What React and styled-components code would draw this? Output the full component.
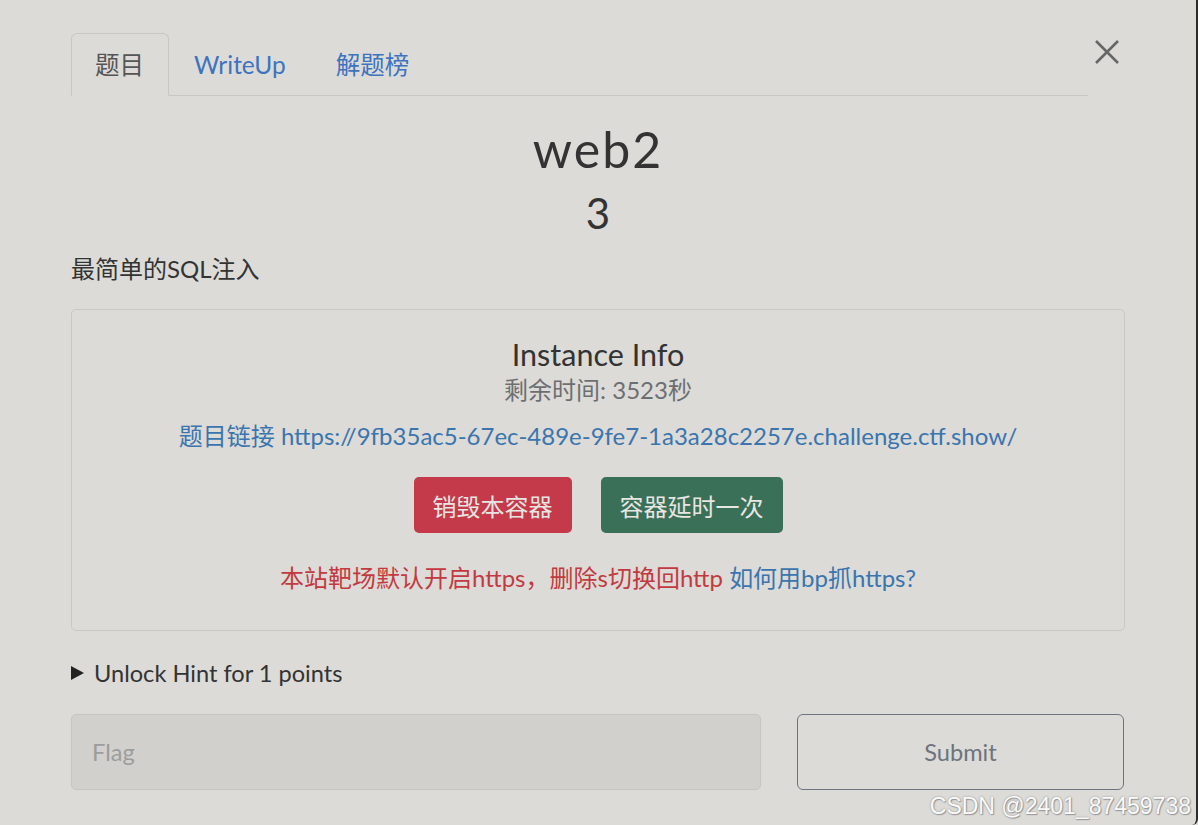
import React from 'react'
import styled, { createGlobalStyle } from 'styled-components'

const GlobalStyle = createGlobalStyle`
  html, body {
    margin: 0;
    padding: 0;
    background: #dcdbd7;
  }
  body {
    font-family: Lato, "Noto Sans CJK SC", sans-serif;
    color: #333;
  }
`

const Modal = styled.div`
  position: relative;
  box-sizing: border-box;
  width: 1198px;
  height: 825px;
  padding: 33px 71px 0 71px;
  border-right: 2px solid #2b2b2b;
  border-bottom-right-radius: 6px;
  background: #dcdbd7;
  overflow: hidden;
`

const Header = styled.div`
  display: flex;
  align-items: flex-start;
`

const TabNav = styled.nav`
  flex: 1;
  display: flex;
  border-bottom: 1px solid #c8c7c3;
`

const Tab = styled.a`
  display: block;
  height: 61px;
  line-height: 62px;
  padding: 0 24px 0 ${p => (p.$active ? '23px' : '24px')};
  margin-bottom: -1px;
  font-size: 24.5px;
  color: ${p => (p.$active ? '#555' : '#3d74bf')};
  border: 1px solid ${p => (p.$active ? '#c8c7c3' : 'transparent')};
  border-bottom-color: ${p => (p.$active ? '#dcdbd7' : 'transparent')};
  border-radius: 6px 6px 0 0;
  text-decoration: none;
  cursor: pointer;
`

const Close = styled.button`
  width: 37px;
  height: 37px;
  padding: 0;
  border: none;
  background: none;
  display: flex;
  align-items: center;
  justify-content: center;
  cursor: pointer;
`

const Title = styled.h1`
  margin: 23px 0 0;
  text-align: center;
  font-size: 50px;
  line-height: 60px;
  font-weight: 400;
  letter-spacing: 2px;
  color: #333;
`

const Value = styled.h3`
  margin: 9px 0 0;
  text-align: center;
  font-size: 42px;
  line-height: 50px;
  font-weight: 400;
  color: #333;
`

const Description = styled.p`
  margin: 15px 0 0;
  font-size: 24px;
  line-height: 32px;
  color: #333;
`

const InfoBox = styled.div`
  margin-top: 24px;
  padding: 24px 0 37px;
  border: 1px solid #c9c8c4;
  border-radius: 5px;
  text-align: center;
`

const BoxTitle = styled.div`
  font-size: 30.5px;
  line-height: 40px;
  color: #333;
`

const Timer = styled.div`
  margin-top: 1px;
  font-size: 24px;
  line-height: 30px;
  color: #6c6f72;
`

const InfoLine = styled.div`
  margin-top: ${p => p.$gap || 0}px;
  font-size: 24px;
  line-height: 30px;
  color: #c23a40;
`

const Link = styled.a`
  color: #3a75ae;
  text-decoration: none;
`

const Actions = styled.div`
  margin-top: 26px;
  display: flex;
  justify-content: center;
  gap: 29px;
`

const ActionButton = styled.button`
  height: 56px;
  padding: 0 ${p => p.$pad || 19}px;
  border: none;
  border-radius: 5px;
  font-family: Lato, "Noto Sans CJK SC", sans-serif;
  font-size: 24px;
  color: #e8e6e2;
  background: ${p => p.$bg};
  cursor: pointer;
`

const HintToggle = styled.div`
  margin-top: 27px;
  display: flex;
  align-items: center;
  gap: 10px;
  font-size: 23.6px;
  line-height: 30px;
  color: #333;
  cursor: pointer;
`

const FlagForm = styled.form`
  margin-top: 26px;
  display: flex;
  gap: 36px;
`

const FlagInput = styled.input`
  box-sizing: border-box;
  width: 690px;
  height: 76px;
  padding: 0 20px;
  border: 1px solid #c6c5c1;
  border-radius: 5px;
  background: #d1d0cc;
  font-family: Lato, "Noto Sans CJK SC", sans-serif;
  font-size: 23.6px;
  color: #333;
  outline: none;
  &::placeholder {
    color: #9c9d9d;
  }
`

const SubmitButton = styled.button`
  box-sizing: border-box;
  width: 327px;
  height: 76px;
  border: 1px solid #6c757d;
  border-radius: 6px;
  background: transparent;
  font-family: Lato, "Noto Sans CJK SC", sans-serif;
  font-size: 23.6px;
  color: #6c757d;
  cursor: pointer;
`

const Watermark = styled.div`
  position: absolute;
  right: 5px;
  bottom: 7px;
  font-family: "Liberation Sans", Arial, sans-serif;
  font-size: 23px;
  line-height: 24px;
  color: #fafafa;
  text-shadow: 0 0 2px #8a8a8a, 1px 1px 1px #9a9a9a;
  pointer-events: none;
`

const CloseIcon = () => (
  <svg width="24" height="24" viewBox="0 0 24 24">
    <path d="M1 1 L23 23 M23 1 L1 23" stroke="#666" strokeWidth="2.6" fill="none" />
  </svg>
)

const Triangle = () => (
  <svg width="13" height="14" viewBox="0 0 13 14">
    <path d="M0 0 L13 7 L0 14 Z" fill="#222" />
  </svg>
)

export default function App() {
  return (
    <>
      <GlobalStyle />
      <Modal>
        <Header>
          <TabNav>
            <Tab $active>题目</Tab>
            <Tab>WriteUp</Tab>
            <Tab>解题榜</Tab>
          </TabNav>
          <Close aria-label="close">
            <CloseIcon />
          </Close>
        </Header>

        <Title>web2</Title>
        <Value>3</Value>
        <Description>最简单的SQL注入</Description>

        <InfoBox>
          <BoxTitle>Instance Info</BoxTitle>
          <Timer>剩余时间: 3523秒</Timer>
          <InfoLine $gap={16}>
            <Link>题目链接 https://9fb35ac5-67ec-489e-9fe7-1a3a28c2257e.challenge.ctf.show/</Link>
          </InfoLine>
          <Actions>
            <ActionButton $bg="#c43a4b">销毁本容器</ActionButton>
            <ActionButton $bg="#3a7058">容器延时一次</ActionButton>
          </Actions>
          <InfoLine $gap={30}>
            本站靶场默认开启https，删除s切换回http <Link>如何用bp抓https?</Link>
          </InfoLine>
        </InfoBox>

        <HintToggle>
          <Triangle />
          Unlock Hint for 1 points
        </HintToggle>

        <FlagForm onSubmit={e => e.preventDefault()}>
          <FlagInput placeholder="Flag" />
          <SubmitButton type="submit">Submit</SubmitButton>
        </FlagForm>

        <Watermark>CSDN @2401_87459738</Watermark>
      </Modal>
    </>
  )
}
